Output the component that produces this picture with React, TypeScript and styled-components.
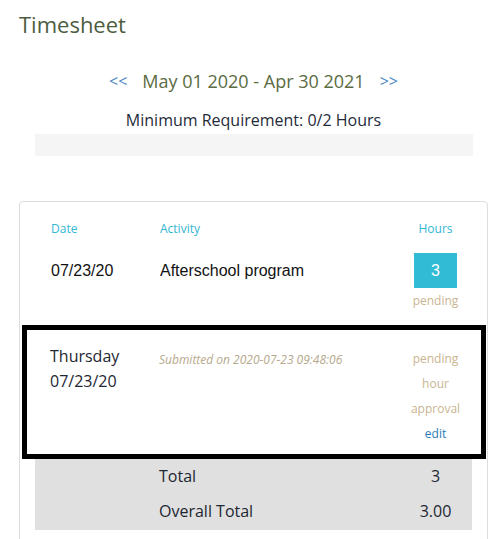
import React from "react";
import styled, { createGlobalStyle } from "styled-components";

const Global = createGlobalStyle`
  html, body { margin: 0; padding: 0; background: #fff; }
  body { font-family: "Open Sans", "Liberation Sans", sans-serif; }
`;

const Page = styled.div`
  width: 492px;
  padding: 9px 4px 0 19px;
  box-sizing: border-box;
`;

const Title = styled.h1`
  margin: 0;
  font-size: 22px;
  line-height: 30px;
  font-weight: 400;
  color: #4e5d3f;
`;

const Nav = styled.div`
  width: 469px;
  margin-top: 30px;
  display: flex;
  justify-content: center;
  align-items: center;
  gap: 15px;
  font-size: 18px;
  line-height: 24px;
`;

const Arrow = styled.a`
  color: #4a86c3;
  font-size: 16px;
  text-decoration: none;
  cursor: pointer;
`;

const Range = styled.span`
  color: #5b6b42;
`;

const Requirement = styled.div`
  width: 469px;
  margin-top: 16px;
  text-align: center;
  font-size: 16px;
  line-height: 22px;
  color: #1f2b39;
`;

const ProgressBar = styled.div`
  margin: 3px 15px 0 16px;
  height: 22px;
  background: #f5f5f5;
`;

const Card = styled.div`
  margin-top: 45px;
  width: 469px;
  box-sizing: border-box;
  border: 1px solid #dddddd;
  border-radius: 4px;
  padding: 17px 15px 20px 15px;
`;

const Row = styled.div`
  display: grid;
  grid-template-columns: 109px 1fr 73px;
  align-items: start;
`;

const HeadCell = styled.div<{ $center?: boolean }>`
  font-size: 12px;
  line-height: 20px;
  color: #32b6d3;
  padding-left: ${(p) => (p.$center ? "0" : "16px")};
  text-align: ${(p) => (p.$center ? "center" : "left")};
`;

const EntryRow = styled(Row)`
  padding: 14px 0 14px;
`;

const PlainCell = styled.div`
  font-family: "Liberation Sans", Arial, sans-serif;
  font-size: 16px;
  line-height: 35px;
  color: #111;
  padding-left: 16px;
`;

const HoursCell = styled.div`
  display: flex;
  flex-direction: column;
  align-items: center;
`;

const Badge = styled.div`
  width: 43px;
  height: 35px;
  background: #31bbd5;
  color: #fff;
  font-family: "Liberation Sans", Arial, sans-serif;
  font-size: 16px;
  line-height: 35px;
  text-align: center;
`;

const Status = styled.div<{ $top?: number }>`
  font-size: 12px;
  line-height: 20px;
  color: #c9b591;
  margin-top: ${(p) => p.$top ?? 0}px;
`;

const Highlight = styled.div`
  margin: 0 -14px 0 -13px;
  border: 5px solid #000;
  padding: 0 9px 8px 8px;
`;

const DayCell = styled.div`
  padding: 14px 0 0 15px;
  font-size: 16px;
  line-height: 25px;
  color: #1d2733;
`;

const Note = styled.div`
  padding: 22px 0 0 15px;
  font-size: 12px;
  line-height: 16px;
  font-style: italic;
  color: #b6a88c;
  white-space: nowrap;
`;

const StatusStack = styled.div`
  padding-top: 16px;
  display: flex;
  flex-direction: column;
  align-items: center;
  font-size: 12px;
  line-height: 25px;
  color: #c9b591;
`;

const EditLink = styled.a`
  color: #2b7cb6;
  text-decoration: none;
  cursor: pointer;
`;

const Totals = styled.div`
  background: #e0e0e0;
  padding: 0 0 1px;
`;

const TotalRow = styled(Row)`
  font-size: 16px;
  line-height: 35px;
  color: #1d2733;
`;

const TotalLabel = styled.div`
  grid-column: 2;
  padding-left: 15px;
`;

const TotalValue = styled.div`
  text-align: center;
`;

export default function App() {
  return (
    <>
      <Global />
      <Page>
        <Title>Timesheet</Title>
        <Nav>
          <Arrow>&lt;&lt;</Arrow>
          <Range>May 01 2020 - Apr 30 2021</Range>
          <Arrow>&gt;&gt;</Arrow>
        </Nav>
        <Requirement>Minimum Requirement: 0/2 Hours</Requirement>
        <ProgressBar />
        <Card>
          <Row>
            <HeadCell>Date</HeadCell>
            <HeadCell>Activity</HeadCell>
            <HeadCell $center>Hours</HeadCell>
          </Row>
          <EntryRow>
            <PlainCell>07/23/20</PlainCell>
            <PlainCell>Afterschool program</PlainCell>
            <HoursCell>
              <Badge>3</Badge>
              <Status $top={3}>pending</Status>
            </HoursCell>
          </EntryRow>
          <Highlight>
            <Row>
              <DayCell>
                Thursday
                <br />
                07/23/20
              </DayCell>
              <Note>Submitted on 2020-07-23 09:48:06</Note>
              <StatusStack>
                <span>pending</span>
                <span>hour</span>
                <span>approval</span>
                <EditLink>edit</EditLink>
              </StatusStack>
            </Row>
          </Highlight>
          <Totals>
            <TotalRow>
              <TotalLabel>Total</TotalLabel>
              <TotalValue>3</TotalValue>
            </TotalRow>
            <TotalRow>
              <TotalLabel>Overall Total</TotalLabel>
              <TotalValue>3.00</TotalValue>
            </TotalRow>
          </Totals>
        </Card>
      </Page>
    </>
  );
}
